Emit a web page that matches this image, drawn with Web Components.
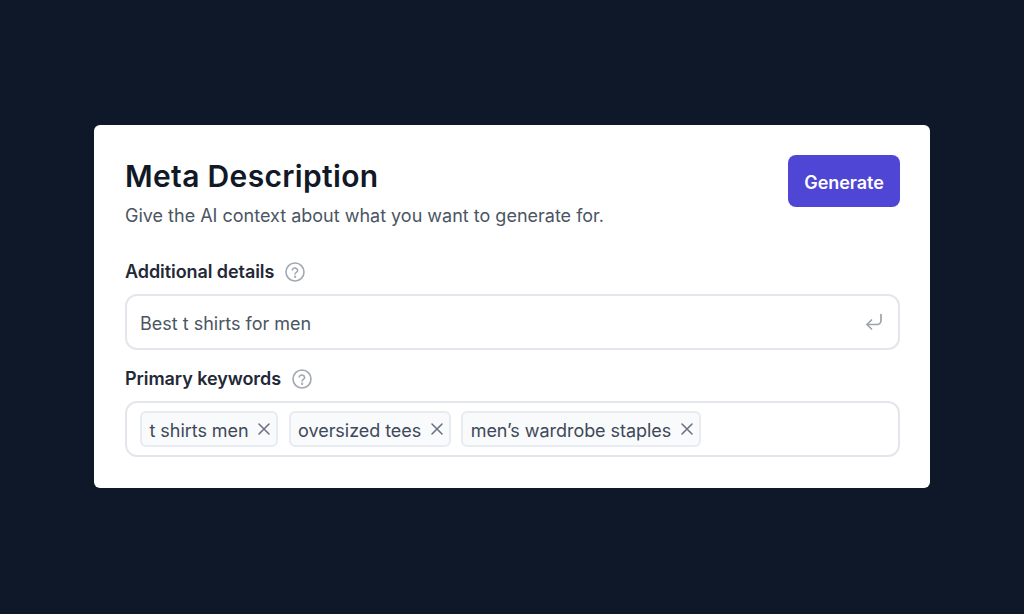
<!DOCTYPE html>
<html><head><meta charset="utf-8"><title>Meta Description</title>
<style>
html,body{margin:0;height:100%}
body{background:#0e1828;font-family:Inter,"Liberation Sans",sans-serif;display:flex;align-items:flex-start;justify-content:center;height:614px;overflow:hidden;padding-top:125px;box-sizing:border-box}
</style></head><body>
<meta-card>
  <span slot="title">Meta Description</span>
  <span slot="subtitle">Give the AI context about what you want to generate for.</span>
  <gen-button slot="action">Generate</gen-button>
  <form-field label="Additional details">
    <text-box>Best t shirts for men</text-box>
  </form-field>
  <form-field label="Primary keywords">
    <chip-box>
      <key-chip>t shirts men</key-chip>
      <key-chip>oversized tees</key-chip>
      <key-chip>men’s wardrobe staples</key-chip>
    </chip-box>
  </form-field>
</meta-card>
<script>
function def(name, html, setup){
  customElements.define(name, class extends HTMLElement{
    constructor(){super();this.attachShadow({mode:'open'}).innerHTML=html;}
    connectedCallback(){if(setup)setup(this);}
  });
}
def('meta-card',`<style>
:host{display:block;box-sizing:border-box;width:836px;height:363px;background:#fff;border-radius:6px;padding:30px 30px 30px 31px}
header{display:flex;justify-content:space-between;align-items:flex-start;margin-bottom:32px}
h1{margin:0;font:600 30px/42px Inter,sans-serif;color:#111827;letter-spacing:.33px}
p{margin:7px 0 0;font:400 18px/24px Inter,sans-serif;color:#4b5563}
.fields{display:flex;flex-direction:column;gap:17px}
</style><header><div><h1><slot name="title"></slot></h1><p><slot name="subtitle"></slot></p></div><slot name="action"></slot></header><div class="fields"><slot></slot></div>`);
def('gen-button',`<style>
:host{display:flex;align-items:center;justify-content:center;box-sizing:border-box;width:112px;height:52px;padding-top:3px;background:#4f46d5;color:#fff;border-radius:8px;font:600 18px/24px Inter,sans-serif;letter-spacing:-.05px}
</style><slot></slot>`);
const help=`<svg width="20" height="20" viewBox="0 0 20 20" fill="none" stroke="#a3a8b0" stroke-width="1.6" stroke-linecap="round" stroke-linejoin="round"><circle cx="10" cy="10" r="9"/><path d="M7.3 7.8a2.8 2.7 0 0 1 5.4.7c0 1.7-2.6 2-2.6 3.5"/><circle cx="10.1" cy="14.7" r=".4" fill="#a3a8b0"/></svg>`;
def('form-field',`<style>
:host{display:block}
label{display:flex;align-items:center;font:600 18px/24px Inter,sans-serif;color:#1f2937;margin-bottom:10px;height:24px;letter-spacing:-.07px}
svg{display:block;margin-left:11px;margin-top:-1px}
</style><label><span id="t"></span>${help}</label><slot></slot>`,el=>{
  el.shadowRoot.getElementById('t').textContent=el.getAttribute('label');
});
def('text-box',`<style>
:host{display:flex;align-items:center;justify-content:space-between;box-sizing:border-box;height:56px;border:2px solid #e3e6ea;border-radius:12px;padding:3px 14.5px 0 13px;font:400 18px/24px Inter,sans-serif;color:#4b5563}
svg{display:block;margin-top:-3px}
</style><slot></slot><svg width="20" height="20" viewBox="0 0 20 20" fill="none" stroke="#9ca3af" stroke-width="1.7" stroke-linecap="round" stroke-linejoin="round"><path d="M17 2.5v6a4 4 0 0 1-4 4H3"/><path d="M7.5 8 3 12.5 7.5 17"/></svg>`);
def('chip-box',`<style>
:host{display:flex;align-items:center;gap:10.5px;box-sizing:border-box;height:56px;border:2px solid #e3e6ea;border-radius:12px;padding:0 13px}
</style><slot></slot>`);
def('key-chip',`<style>
:host{display:inline-flex;align-items:center;box-sizing:border-box;height:36px;background:#f8fafc;border:2px solid #e8ebef;border-radius:6px;padding:3px 5px 0 7.5px;font:400 18px/24px Inter,sans-serif;letter-spacing:-.05px;color:#3f4858;white-space:nowrap}
svg{display:block;margin-left:8.5px;margin-top:-3px}
</style><slot></slot><svg width="14" height="14" viewBox="0 0 14 14" fill="none" stroke="#6b7280" stroke-width="1.6" stroke-linecap="round"><path d="M2 2l10 10M12 2 2 12"/></svg>`);
</script>
</body></html>
